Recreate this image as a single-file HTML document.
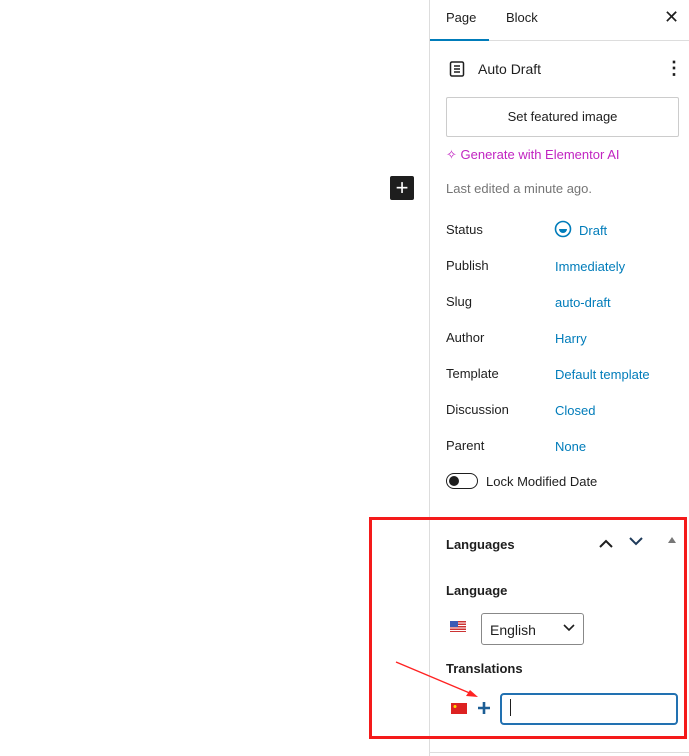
<!DOCTYPE html>
<html><head><meta charset="utf-8"><style>
body{margin:0;width:689px;height:756px;background:#fff;font-family:"Liberation Sans",sans-serif;font-size:13px;color:#1e1e1e;position:relative;overflow:hidden}
.a{position:absolute;white-space:nowrap}
.lbl{left:446px}
.val{left:555px;color:#007cba}
</style></head><body>
<div class="a" style="left:429px;top:0;width:1px;height:756px;background:#ddd"></div>
<div class="a" style="left:390px;top:176px;width:24px;height:24px;background:#1e1e1e;border-radius:2px;color:#fff;font-size:22px;line-height:23px;text-align:center">+</div>
<div class="a" style="left:430px;top:40px;width:259px;height:1px;background:#ddd"></div>
<div class="a" style="left:430px;top:39px;width:59px;height:2px;background:#007cba"></div>
<div class="a" style="left:446px;top:10px">Page</div>
<div class="a" style="left:506px;top:10px">Block</div>
<div class="a" style="left:664px;top:7px;font-size:18px">✕</div>
<svg class="a" style="left:449px;top:61px" width="16" height="16" viewBox="0 0 16 16"><rect x="1.5" y="1" width="13" height="14" rx="1.5" fill="none" stroke="#1e1e1e" stroke-width="1.5"/><path d="M5 5h6M5 8h6M5 11h6" stroke="#1e1e1e" stroke-width="1.5"/></svg>
<div class="a" style="left:478px;top:61px;font-size:14px">Auto Draft</div>
<div class="a" style="left:665px;top:58px;font-size:18px;font-weight:bold;line-height:20px">⋮</div>
<div class="a" style="left:446px;top:97px;width:231px;height:38px;border:1px solid #ccc;border-radius:2px;text-align:center;line-height:38px">Set featured image</div>
<div class="a" style="left:446px;top:147px;color:#c124c1">✧ Generate with Elementor AI</div>
<div class="a" style="left:446px;top:181px;color:#757575">Last edited a minute ago.</div>
<div class="a lbl" style="top:222px">Status</div>
<svg class="a" style="left:554px;top:220px" width="18" height="18" viewBox="0 0 18 18"><circle cx="9" cy="9" r="7.5" fill="none" stroke="#007cba" stroke-width="1.6"/><path d="M5 9h8a4 4 0 0 1-8 0z" fill="#007cba"/></svg>
<div class="a val" style="left:579px;top:223px">Draft</div>
<div class="a lbl" style="top:258px">Publish</div><div class="a val" style="top:259px">Immediately</div>
<div class="a lbl" style="top:294px">Slug</div><div class="a val" style="top:295px">auto-draft</div>
<div class="a lbl" style="top:330px">Author</div><div class="a val" style="top:331px">Harry</div>
<div class="a lbl" style="top:366px">Template</div><div class="a val" style="top:367px">Default template</div>
<div class="a lbl" style="top:402px">Discussion</div><div class="a val" style="top:403px">Closed</div>
<div class="a lbl" style="top:438px">Parent</div><div class="a val" style="top:439px">None</div>
<div class="a" style="left:446px;top:473px;width:30px;height:14px;border:1px solid #1e1e1e;border-radius:9px"></div>
<div class="a" style="left:449px;top:476px;width:10px;height:10px;border-radius:50%;background:#1e1e1e"></div>
<div class="a" style="left:486px;top:474px">Lock Modified Date</div>
<div class="a" style="left:430px;top:752px;width:259px;height:1px;background:#ddd"></div>
<div class="a" style="left:446px;top:537px;font-weight:bold">Languages</div>
<svg class="a" style="left:598px;top:536px" width="16" height="14"><path d="M2 11l6-6 6 6" fill="none" stroke="#1e1e1e" stroke-width="2"/></svg>
<svg class="a" style="left:628px;top:534px" width="16" height="14"><path d="M2 4l6 6 6-6" fill="none" stroke="#1e3a5a" stroke-width="2"/></svg>
<div class="a" style="left:668px;top:537px;width:0;height:0;border-left:4px solid transparent;border-right:4px solid transparent;border-bottom:6px solid #777"></div>
<div class="a" style="left:446px;top:583px;font-weight:bold">Language</div>
<svg class="a" style="left:450px;top:621px" width="16" height="11"><rect width="16" height="11" fill="#c33"/><path d="M0 2h16M0 4.5h16M0 7h16M0 9.5h16" stroke="#fff" stroke-width="1"/><rect width="8" height="6" fill="#3b5bb5"/></svg>
<div class="a" style="left:481px;top:613px;width:101px;height:30px;border:1px solid #888;border-radius:3px"></div>
<div class="a" style="left:490px;top:622px;font-size:14px">English</div>
<svg class="a" style="left:563px;top:624px" width="12" height="8"><path d="M1 1l5 5 5-5" fill="none" stroke="#1e1e1e" stroke-width="1.6"/></svg>
<div class="a" style="left:446px;top:661px;font-weight:bold">Translations</div>
<svg class="a" style="left:451px;top:703px" width="16" height="11"><rect width="16" height="11" fill="#d22"/><circle cx="4" cy="3.5" r="1.5" fill="#fd0"/></svg>
<svg class="a" style="left:477px;top:701px" width="14" height="14"><path d="M7 1v12M1 7h12" stroke="#1c5e95" stroke-width="2.6"/></svg>
<div class="a" style="left:500px;top:693px;width:174px;height:28px;border:2px solid #2271b1;border-radius:4px"></div>
<div class="a" style="left:510px;top:699px;width:1px;height:17px;background:#1e1e1e"></div>
<svg class="a" style="left:0;top:0" width="689" height="756"><path d="M396 662L472 694" stroke="#f22" stroke-width="1.4"/><path d="M478 697l-12-1 4-6z" fill="#f22"/></svg>
<div class="a" style="left:369px;top:517px;width:312px;height:216px;border:3px solid #f41a1a"></div>
</body></html>
